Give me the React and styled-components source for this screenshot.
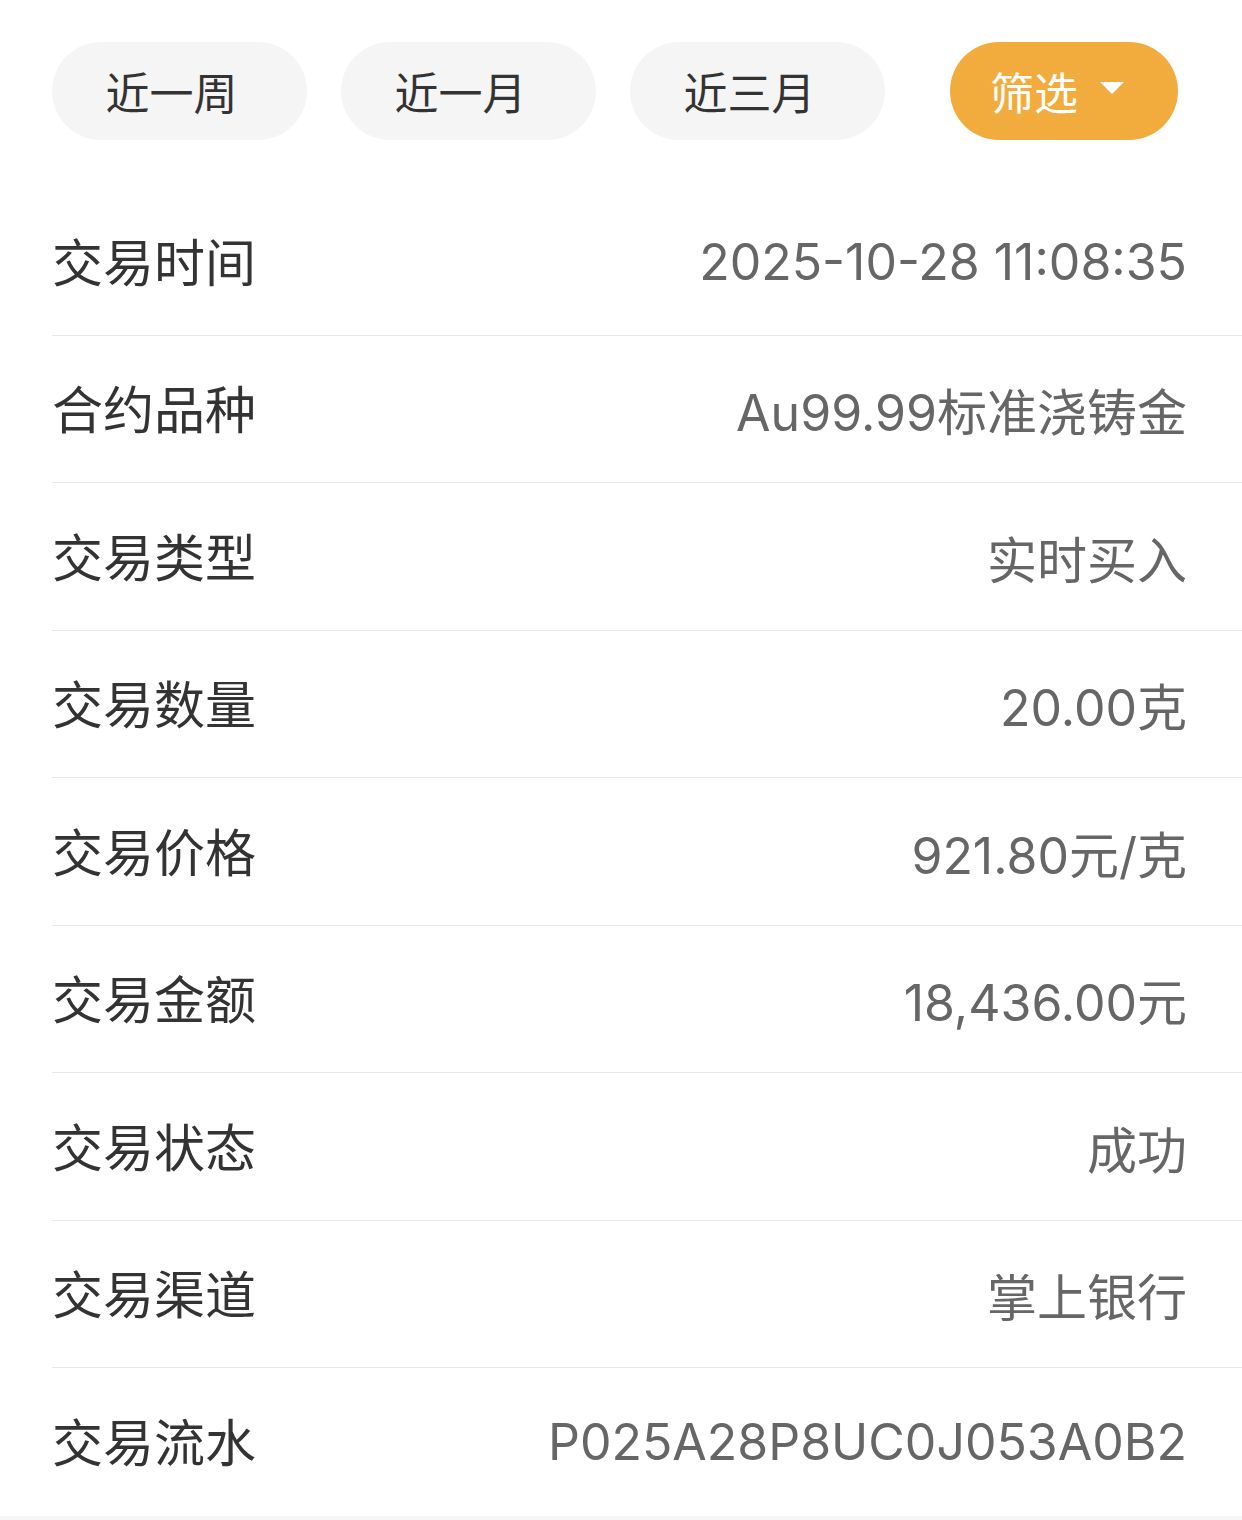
import React from "react";
import styled, { createGlobalStyle } from "styled-components";

const Global = createGlobalStyle`
  html, body { margin: 0; padding: 0; background: #ffffff; }
  body { font-family: "Inter", "Noto Sans CJK SC", sans-serif; }
`;

const Page = styled.div`
  width: 1242px;
  height: 1520px;
  background: #ffffff;
  display: flex;
  flex-direction: column;
  overflow: hidden;
`;

const Toolbar = styled.div`
  display: flex;
  align-items: center;
  gap: 34px;
  padding: 42px 0 0 52px;
  margin-bottom: 48px;
`;

const Pill = styled.button`
  width: ${(p) => p.$w || 255}px;
  height: 98px;
  box-sizing: border-box;
  border: none;
  border-radius: 49px;
  background: ${(p) => (p.$active ? "#f2ac3e" : "#f5f5f5")};
  color: ${(p) => (p.$active ? "#ffffff" : "#333333")};
  font-family: "Noto Sans CJK SC", sans-serif;
  font-size: 44px;
  display: flex;
  align-items: center;
  justify-content: center;
  gap: 22px;
  padding: 0 ${(p) => (p.$active ? 14 : 16)}px 0 0;
  margin-left: ${(p) => p.$ml || 0}px;
  cursor: pointer;
`;

const Caret = styled.span`
  width: 0;
  height: 0;
  border-left: 12px solid transparent;
  border-right: 12px solid transparent;
  border-top: 12px solid #ffffff;
  margin-top: -6px;
`;

const List = styled.div`
  display: flex;
  flex-direction: column;
  padding-left: 52px;
`;

const Row = styled.div`
  height: 147.5px;
  box-sizing: border-box;
  display: flex;
  align-items: center;
  justify-content: space-between;
  padding-right: 55px;
  border-bottom: ${(p) => (p.$last ? "none" : "1.5px solid #e8e8e8")};
`;

const Label = styled.span`
  font-family: "Noto Sans CJK SC", sans-serif;
  font-size: 51px;
  color: #333333;
  margin-top: -3px;
`;

const Value = styled.span`
  font-family: "Inter", "Noto Sans CJK SC", sans-serif;
  font-size: 50px;
  color: #666666;
  margin-top: 1px;
`;

const Footer = styled.div`
  flex: 1;
  background: #f5f5f5;
`;

const rows = [
  ["交易时间", "2025-10-28 11:08:35"],
  ["合约品种", "Au99.99标准浇铸金"],
  ["交易类型", "实时买入"],
  ["交易数量", "20.00克"],
  ["交易价格", "921.80元/克"],
  ["交易金额", "18,436.00元"],
  ["交易状态", "成功"],
  ["交易渠道", "掌上银行"],
  ["交易流水", "P025A28P8UC0J053A0B2"],
];

export default function App() {
  return (
    <Page>
      <Global />
      <Toolbar>
        <Pill>近一周</Pill>
        <Pill>近一月</Pill>
        <Pill>近三月</Pill>
        <Pill $active $w={228} $ml={31}>
          筛选
          <Caret />
        </Pill>
      </Toolbar>
      <List>
        {rows.map(([k, v], i) => (
          <Row key={k} $last={i === rows.length - 1}>
            <Label>{k}</Label>
            <Value>{v}</Value>
          </Row>
        ))}
      </List>
      <Footer />
    </Page>
  );
}
